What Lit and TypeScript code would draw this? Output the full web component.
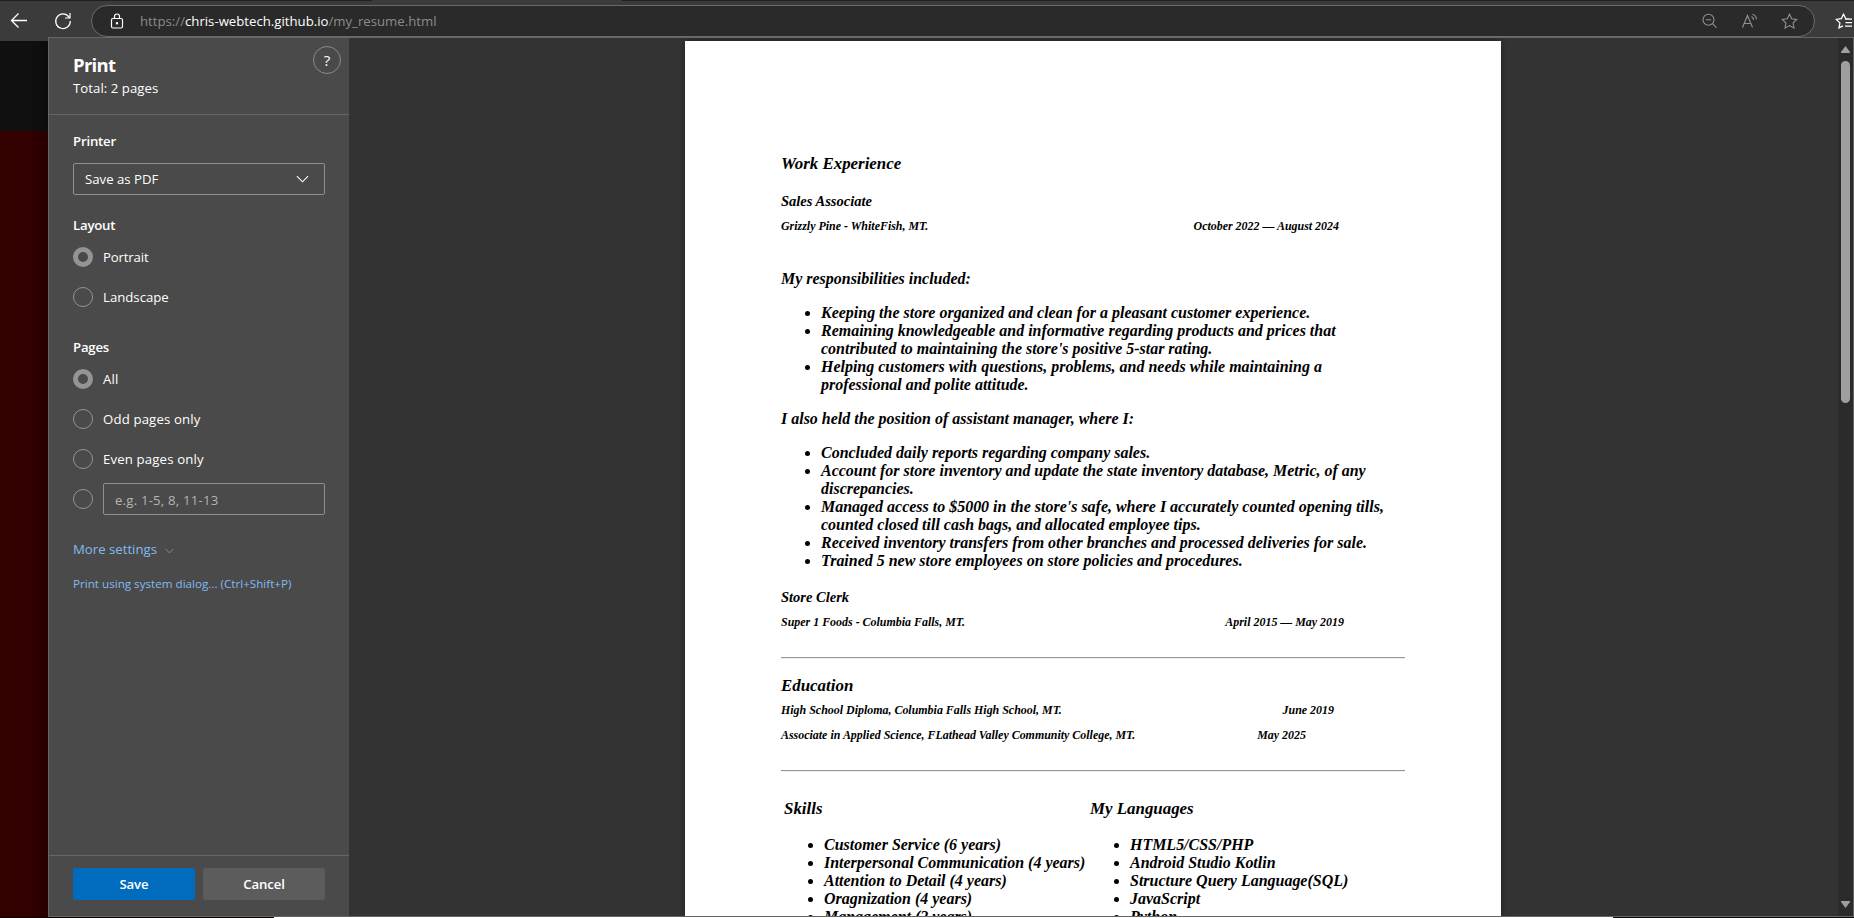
import { LitElement, html, css, svg } from "lit";
import { customElement } from "lit/decorators.js";

const chevron = (cls: string) => html`<svg class=${cls} viewBox="0 0 14 8" fill="none" stroke="currentColor" stroke-width="1.2"><path d="M1 1l6 6 6-6"/></svg>`;
const starPath = svg`<path d="M8.500 1.200l2.200 4.600 5 .7-3.600 3.500.9 5-4.500-2.400L4 15l.9-5L1.300 6.500l5-.7z"/>`;

@customElement("browser-bar")
export class BrowserBar extends LitElement {
  static styles = css`
    :host { display: flex; height: 41px; background: #3b3b3b; box-sizing: border-box; position: relative; color: #fff; }
    .tabs { position: absolute; left: 0; right: 0; top: 0; height: 1px; background: linear-gradient(90deg, #202020 372px, #3b3b3b 372px 622px, #202020 622px); }
    .nav { width: 91px; flex: none; display: flex; align-items: flex-start; padding-left: 10px; box-sizing: border-box; }
    .back { width: 18px; height: 17px; margin-top: 12px; }
    .reload { width: 18px; height: 18px; margin: 12px 0 0 26px; }
    .pill { width: 1724px; flex: none; box-sizing: border-box; height: 32px; margin-top: 5px; border: 1px solid #6b6b6b; border-radius: 16px; background: #2a2a2a; display: flex; align-items: center; padding: 0 16px 0 18px; }
    .lock { width: 14px; height: 17px; }
    .url { margin-left: 16px; font: 13.200px/20px "Open Sans", "Noto Sans", sans-serif; color: #8b8b8b; flex: 1; }
    .url b { color: #fff; font-weight: 400; }
    .tools { display: flex; gap: 23px; color: #929292; }
    .tools svg { width: 17px; height: 17px; display: block; }
    .fav { width: 18px; height: 17px; margin: 13px 0 0 20px; flex: none; }
  `;
  render() {
    return html`
      <div class="nav">
        <svg class="back" viewBox="0 0 18 17" fill="none" stroke="currentColor" stroke-width="1.3"><path d="M17 8.500H1.500M8.500 1.500l-7 7 7 7"/></svg>
        <svg class="reload" viewBox="0 0 18 18" fill="none" stroke="currentColor" stroke-width="1.2"><path d="M16.300 9A7.300 7.300 0 1 1 14.800 4.800L16 6M16 1v5h-5"/></svg>
      </div>
      <div class="pill">
        <svg class="lock" viewBox="0 0 14 17" fill="none" stroke="currentColor" stroke-width="1.2"><rect x="1.500" y="5.500" width="11" height="9.500" rx="1.500"/><path d="M4.500 5.500V3.500a2.500 2.500 0 0 1 5 0v2"/><circle cx="7" cy="10.300" r=".6" fill="currentColor"/></svg>
        <div class="url">https://<b>chris-webtech.github.io</b>/my_resume.html</div>
        <div class="tools">
          <svg viewBox="0 0 17 17" fill="none" stroke="currentColor" stroke-width="1.1"><circle cx="7.500" cy="6.700" r="5.500"/><path d="M11.500 10.700l4 4M5 6.700h5"/></svg>
          <svg viewBox="0 0 17 17" fill="none" stroke="currentColor" stroke-width="1.1"><path d="M1.500 14.500l5-12 5 12M3.300 10.500h6.400M10.500 3.500q2 1 2 3.500M11.500 1.200q4 1.300 3.800 5.300"/></svg>
          <svg viewBox="0 0 17 17" fill="none" stroke="currentColor" stroke-width="1.1">${starPath}</svg>
        </div>
      </div>
      <svg class="fav" viewBox="0 0 18 17" fill="none" stroke="currentColor" stroke-width="1.3"><path d="M15 6.200l-4.200-.5L8.500 1.200 6.300 5.700l-5 .7 3.600 3.500-.9 5L8 12.800M10 6.200h7M10.500 9.700H17M10 13.200h7"/></svg>
      <div class="tabs"></div>`;
  }
}

@customElement("print-panel")
export class PrintPanel extends LitElement {
  static styles = css`
    :host { display: flex; flex-direction: column; width: 300px; flex: none; background: #4a4a4a; color: #fff; font: 13.200px/20px "Open Sans", "Noto Sans", sans-serif; }
    header { height: 77px; flex: none; box-sizing: border-box; border-bottom: 1px solid #666; padding: 13px 8px 0 24px; display: flex; justify-content: space-between; }
    h1 { font-size: 18.500px; font-weight: 700; line-height: 28px; margin: 0; letter-spacing: -.7px; }
    .help { box-sizing: border-box; width: 28px; height: 28px; border: 1px solid #8a8a8a; border-radius: 50%; text-align: center; line-height: 26px; font-size: 15px; margin-top: -5px; }
    .total { margin-top: -1px; letter-spacing: .05px; }
    .body { flex: 1; padding: 16px 24px 0; }
    h2 { font-size: 13.200px; font-weight: 600; line-height: 20px; margin: 0; letter-spacing: -.2px; }
    .select { box-sizing: border-box; height: 32px; border: 1px solid #8f8f8f; border-radius: 2px; margin: 12px 0 20px; display: flex; align-items: center; justify-content: space-between; padding: 0 15px 0 11px; }
    .wide { width: 13px; height: 8px; }
    .row { display: flex; align-items: center; height: 20px; margin: 12px 0 20px; gap: 10px; }
    .row + .row { margin-top: 20px; }
    .spaced { letter-spacing: .15px; }
    .snug { letter-spacing: -.15px; }
    .radio { box-sizing: border-box; width: 20px; height: 20px; border: 1px solid #949494; border-radius: 50%; flex: none; }
    .on { border: 5px solid #949494; }
    .row.last { margin-bottom: 30px; }
    .row.end { margin-bottom: 0; }
    .input { flex: 1; box-sizing: border-box; height: 32px; border: 1px solid #8f8f8f; border-radius: 2px; padding: 0 11px; line-height: 32px; color: #b4b4b4; letter-spacing: .2px; }
    .more { display: flex; align-items: center; gap: 8px; color: #82baf0; margin-top: 30px; }
    .small { width: 9px; height: 6px; opacity: .8; margin-top: 3px; }
    .system { font-size: 11.650px; color: #82baf0; margin-top: 15px; white-space: nowrap; }
    footer { height: 61px; flex: none; box-sizing: border-box; border-top: 1px solid #666; padding: 12px 24px 0; display: flex; gap: 8px; }
    .btn { flex: 1; height: 32px; border-radius: 2px; background: #5c5c5c; text-align: center; line-height: 32px; font-weight: 600; letter-spacing: -.1px; }
    .primary { background: #006cbe; }
  `;
  row(label: string, on = false, cls = "") {
    return html`<div class="row ${cls}"><span class="radio ${on ? "on" : ""}"></span><span>${label}</span></div>`;
  }
  render() {
    return html`
      <header><div><h1>Print</h1><div class="total">Total: 2 pages</div></div><div class="help">?</div></header>
      <div class="body">
        <h2>Printer</h2>
        <div class="select"><span>Save as PDF</span>${chevron("wide")}</div>
        <h2>Layout</h2>
        ${this.row("Portrait", true, "snug")}${this.row("Landscape", false, "last")}
        <h2>Pages</h2>
        ${this.row("All", true, "spaced")}${this.row("Odd pages only", false, "spaced")}${this.row("Even pages only", false, "spaced")}
        <div class="row end"><span class="radio"></span><span class="input">e.g. 1-5, 8, 11-13</span></div>
        <div class="more"><span>More settings</span>${chevron("small")}</div>
        <div class="system">Print using system dialog... (Ctrl+Shift+P)</div>
      </div>
      <footer><div class="btn primary">Save</div><div class="btn">Cancel</div></footer>`;
  }
}

@customElement("resume-page")
export class ResumePage extends LitElement {
  static styles = css`
    :host { display: block; box-sizing: border-box; width: 816px; height: 875px; overflow: hidden; background: #fff; color: #000; padding: 112px 96px 0; box-shadow: 0 0 6px rgba(0,0,0,.4); font: italic bold 15.980px/18px "Liberation Serif", "Times New Roman", serif; white-space: nowrap; }
    h3 { font-size: 16.900px; line-height: 22px; margin: 0; }
    h4 { font-size: 14.500px; line-height: 18px; margin: 18px 0 0; }
    h3 + h4 { margin-top: 17px; }
    .line { font-size: 11.950px; line-height: 15px; display: flex; justify-content: space-between; margin-top: 9px; }
    p { margin: 0; }
    .first { margin-top: 36px; }
    ul { margin: 16px 0; padding: 0 0 0 40px; }
    li { height: 18px; }
    .two { height: 36px; }
    .rule { height: 1px; background: #979797; border-bottom: 1px solid #eee; }
    .job { padding-right: 66px; }
    .clerk { padding-right: 61px; }
    .hs { padding-right: 71px; margin-top: 6px; }
    .as { padding-right: 99px; margin-top: 10px; }
    .r1 { margin: 27px 0 16px; }
    .r2 { margin: 27px 0 26px; }
    .cols { display: grid; grid-template-columns: 306px 1fr; padding-left: 3px; }
  `;
  render() {
    return html`
      <h3>Work Experience</h3>
      <h4>Sales Associate</h4>
      <div class="line job"><span>Grizzly Pine - WhiteFish, MT.</span><span>October 2022 — August 2024</span></div>
      <p class="first">My responsibilities included:</p>
      <ul>
        <li>Keeping the store organized and clean for a pleasant customer experience.</li>
        <li class="two">Remaining knowledgeable and informative regarding products and prices that<br>contributed to maintaining the store's positive 5-star rating.</li>
        <li class="two">Helping customers with questions, problems, and needs while maintaining a<br>professional and polite attitude.</li>
      </ul>
      <p>I also held the position of assistant manager, where I:</p>
      <ul>
        <li>Concluded daily reports regarding company sales.</li>
        <li class="two">Account for store inventory and update the state inventory database, Metric, of any<br>discrepancies.</li>
        <li class="two">Managed access to $5000 in the store's safe, where I accurately counted opening tills,<br>counted closed till cash bags, and allocated employee tips.</li>
        <li>Received inventory transfers from other branches and processed deliveries for sale.</li>
        <li>Trained 5 new store employees on store policies and procedures.</li>
      </ul>
      <h4>Store Clerk</h4>
      <div class="line clerk"><span>Super 1 Foods - Columbia Falls, MT.</span><span>April 2015 — May 2019</span></div>
      <div class="rule r1"></div>
      <h3>Education</h3>
      <div class="line hs"><span>High School Diploma, Columbia Falls High School, MT.</span><span>June 2019</span></div>
      <div class="line as"><span>Associate in Applied Science, FLathead Valley Community College, MT.</span><span>May 2025</span></div>
      <div class="rule r2"></div>
      <div class="cols">
        <div><h3>Skills</h3><ul>
          <li>Customer Service (6 years)</li><li>Interpersonal Communication (4 years)</li><li>Attention to Detail (4 years)</li><li>Oragnization (4 years)</li><li>Management (2 years)</li>
        </ul></div>
        <div><h3>My Languages</h3><ul>
          <li>HTML5/CSS/PHP</li><li>Android Studio Kotlin</li><li>Structure Query Language(SQL)</li><li>JavaScript</li><li>Python</li>
        </ul></div>
      </div>`;
  }
}

@customElement("app-root")
export class AppRoot extends LitElement {
  static styles = css`
    :host { display: block; width: 1854px; height: 918px; overflow: hidden; position: relative; background: linear-gradient(#101010 131px, #330000 131px); }
    .edge { position: absolute; left: 0; bottom: 0; width: 100%; height: 1px; background: linear-gradient(90deg, #0c0000 274px, #fff 274px 1613px, #0c0c0c 1613px); }
    .dialog { position: absolute; left: 48px; top: 37px; width: 1806px; height: 880px; box-sizing: border-box; border: 1px solid #666; background: #333; display: flex; overflow: hidden; }
    .shade { position: absolute; left: 28px; top: 41px; width: 20px; height: 876px; background: linear-gradient(90deg, transparent, rgba(0,0,0,.25)); }
    .view { flex: 1; display: flex; justify-content: center; padding: 3px 1px 0 0; overflow: hidden; box-sizing: border-box; }
    .scroll { width: 15px; flex: none; background: #2b2b2b; display: flex; flex-direction: column; align-items: center; padding: 8px 0; box-sizing: border-box; }
    .scroll svg { width: 9px; height: 7px; fill: #a0a0a0; flex: none; }
    .track { flex: 1; }
    .thumb { width: 9px; height: 342px; border-radius: 5px; background: #9f9f9f; margin-top: 8px; }
  `;
  render() {
    return html`
      <browser-bar></browser-bar>
      <div class="shade"></div>
      <div class="edge"></div>
      <div class="dialog">
        <print-panel></print-panel>
        <div class="view"><resume-page></resume-page></div>
        <div class="scroll">
          <svg viewBox="0 0 9 7"><path d="M4.500 0L9 6v1H0V6z"/></svg>
          <div class="track"><div class="thumb"></div></div>
          <svg viewBox="0 0 9 7"><path d="M4.500 7L9 1V0H0v1z"/></svg>
        </div>
      </div>`;
  }
}
